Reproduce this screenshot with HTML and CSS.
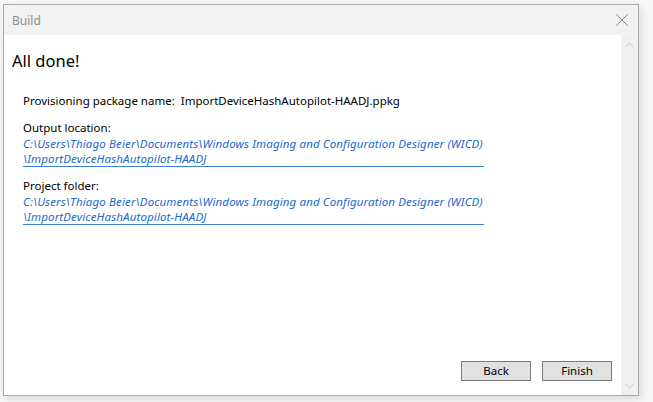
FILE: index.html
```html
<!DOCTYPE html>
<html>
<head>
<meta charset="utf-8">
<link rel="stylesheet" href="styles.css">
</head>
<body>
<div class="window">
  <div class="titlebar">
    <span class="title">Build</span>
    <svg class="close" width="12" height="12" viewBox="0 0 12 12"><path d="M0.5 0.5 L11.5 11.5 M11.5 0.5 L0.5 11.5" stroke="#8a8a8a" stroke-width="1" fill="none"/></svg>
  </div>
  <div class="body">
    <div class="content">
      <h1 class="heading">All done!</h1>
      <div class="info">
        <p class="pkg">Provisioning package name:&nbsp; ImportDeviceHashAutopilot-HAADJ.ppkg</p>
        <div class="field">
          <div class="label">Output location:</div>
          <div class="link">C:\Users\Thiago Beier\Documents\Windows Imaging and Configuration Designer (WICD)<br>\ImportDeviceHashAutopilot-HAADJ</div>
        </div>
        <div class="field">
          <div class="label">Project folder:</div>
          <div class="link">C:\Users\Thiago Beier\Documents\Windows Imaging and Configuration Designer (WICD)<br>\ImportDeviceHashAutopilot-HAADJ</div>
        </div>
      </div>
      <div class="buttons">
        <button class="btn">Back</button>
        <button class="btn">Finish</button>
      </div>
    </div>
    <div class="scrollbar">
      <svg width="9" height="6" viewBox="0 0 9 6"><path d="M0.5 5 L4.5 1 L8.5 5" stroke="#c8c8c8" fill="none"/></svg>
      <svg width="9" height="6" viewBox="0 0 9 6"><path d="M0.5 1 L4.5 5 L8.5 1" stroke="#c8c8c8" fill="none"/></svg>
    </div>
  </div>
</div>
</body>
</html>
```
FILE: styles.css
```css
html, body {
  margin: 0;
  padding: 0;
}
body {
  background: #f7f7f7;
  width: 653px;
  height: 402px;
  padding: 4px 0 0 3px;
  box-sizing: border-box;
  font-family: "Noto Sans", "Open Sans", sans-serif;
  overflow: hidden;
}
.window {
  width: 636px;
  height: 392px;
  box-sizing: border-box;
  border: 1px solid #aaaaaa;
  background: #ffffff;
  display: flex;
  flex-direction: column;
  box-shadow: 2px 3px 8px rgba(0,0,0,0.12);
}
.titlebar {
  height: 30px;
  background: #f2f2f2;
  display: flex;
  align-items: center;
  justify-content: space-between;
  padding: 0 10px 0 8px;
  flex-shrink: 0;
}
.title {
  font-size: 12px;
  color: #8d8d8d;
}
.close {
  display: block;
}
.body {
  flex: 1;
  display: flex;
  min-height: 0;
}
.content {
  flex: 1;
  display: flex;
  flex-direction: column;
  padding: 0 0 0 8px;
}
.heading {
  font-weight: normal;
  font-size: 16.5px;
  margin: 15px 0 0 0;
  color: #000;
  line-height: 22px;
}
.info {
  padding-left: 11px;
  margin-top: 21px;
  font-size: 11.5px;
  color: #000;
}
.pkg {
  margin: 0;
  line-height: 16px;
}
.field {
  margin-top: 11px;
}
.label {
  line-height: 16px;
}
.link {
  width: 461px;
  line-height: 15px;
  font-size: 11.5px;
  color: #2069cf;
  font-style: italic;
  border-bottom: 1px solid #3d7fd2;
  white-space: nowrap;
  letter-spacing: 0.13px;
}
.buttons {
  margin-top: auto;
  margin-bottom: 14px;
  display: flex;
  justify-content: flex-end;
  gap: 11px;
  padding-right: 9px;
}
.btn {
  width: 70px;
  height: 20px;
  background: #e1e1e1;
  border: 1px solid #7a7a7a;
  font-family: "Noto Sans", sans-serif;
  font-size: 11.5px;
  color: #000;
  padding: 0;
  line-height: 18px;
}
.scrollbar {
  width: 17px;
  background: #f0f0f0;
  display: flex;
  flex-direction: column;
  justify-content: space-between;
  align-items: center;
  padding: 7px 0 6px;
  box-sizing: border-box;
}
.scrollbar svg {
  display: block;
}
```
